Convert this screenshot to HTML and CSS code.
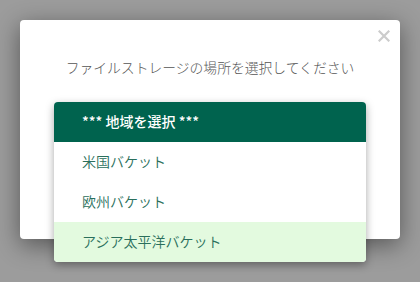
FILE: index.html
```html
<!DOCTYPE html>
<html lang="ja">
<head>
<meta charset="utf-8">
<link rel="stylesheet" href="styles.css">
</head>
<body>
<div class="modal">
  <button class="close" aria-label="close">
    <svg width="12" height="12" viewBox="0 0 12 12"><path d="M1.5 1.5 L10.5 10.5 M10.5 1.5 L1.5 10.5" stroke="#cccccc" stroke-width="2.2" stroke-linecap="square"/></svg>
  </button>
  <p class="title">ファイルストレージの場所を選択してください</p>
  <ul class="dropdown">
    <li class="head">*** 地域を選択 ***</li>
    <li class="item">米国バケット</li>
    <li class="item">欧州バケット</li>
    <li class="item active">アジア太平洋バケット</li>
  </ul>
</div>
</body>
</html>
```
FILE: styles.css
```css
html, body {
  margin: 0;
  height: 100%;
}
body {
  background: #9c9c9c;
  font-family: "Noto Sans CJK JP", "Noto Sans", sans-serif;
  padding: 20px;
  box-sizing: border-box;
  overflow: hidden;
}
.modal {
  position: relative;
  width: 380px;
  height: 219px;
  background: #fff;
  border-radius: 4px;
  box-shadow: 0 6px 24px rgba(0, 0, 0, 0.45);
  padding-top: 36px;
  box-sizing: border-box;
  display: flex;
  flex-direction: column;
  align-items: center;
}
.close {
  position: absolute;
  top: 10px;
  right: 10px;
  border: 0;
  background: none;
  padding: 0;
  width: 12px;
  height: 12px;
  display: flex;
}
.title {
  margin: 0;
  font-size: 13.8px;
  font-weight: 300;
  line-height: 22px;
  color: #555;
}
.dropdown {
  list-style: none;
  margin: 24px 0 0;
  padding: 0;
  width: 312px;
  background: #fff;
  border-radius: 4px;
  overflow: hidden;
  box-shadow: 0 3px 8px rgba(0, 0, 0, 0.35);
  flex-shrink: 0;
}
.dropdown li {
  height: 38px;
  line-height: 38px;
  padding: 0 0 2px 28px;
  font-size: 14px;
}
.head {
  background: #00634e;
  color: #fff;
  font-weight: 500;
}
.item {
  color: #2a6f5c;
  font-weight: 350;
}
.item.active {
  background: #e3fadf;
}
```
